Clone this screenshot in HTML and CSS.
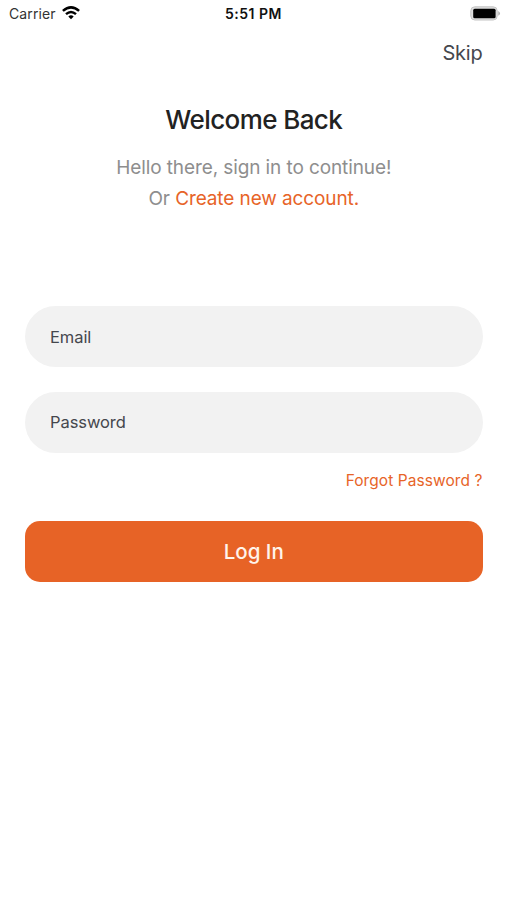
FILE: index.html
```html
<!DOCTYPE html>
<html lang="en">
<head>
<meta charset="utf-8">
<title>Log In</title>
<link rel="stylesheet" href="styles.css">
</head>
<body>
<div class="status">
  <div class="carrier"><span>Carrier</span>
    <svg class="wifi" width="18" height="14" viewBox="0 0 18 14" fill="none" stroke="#000" stroke-width="2.5"><path d="M.9 4.9Q9-2.2 17.1 4.9M4 8.1Q9 3.8 14 8.1"/><path d="M6.3 10.4Q9 8.2 11.7 10.4L9 13.3Z" fill="#000" stroke="none"/></svg>
  </div>
  <div class="time">5:51 PM</div>
  <svg class="battery" width="31" height="15" viewBox="0 0 31 15"><rect x=".8" y=".8" width="26.4" height="13.2" rx="4" fill="#dedede" stroke="#c4c4c4"/><rect x="3.2" y="2.8" width="22.4" height="9.4" rx="1.5"/><path d="M28.3 5Q31.6 7.4 28.3 9.8Z" fill="#aaa"/></svg>
</div>
<main class="screen">
  <a class="skip">Skip</a>
  <h1 class="title">Welcome Back</h1>
  <p class="intro"><span class="hello">Hello there, sign in to continue!</span><br><span class="or">Or <a class="create">Create new account.</a></span></p>
  <form class="form">
    <div class="field"><span class="email">Email</span></div>
    <div class="field"><span class="password">Password</span></div>
    <a class="forgot">Forgot Password ?</a>
    <button class="login" type="button"><span>Log In</span></button>
  </form>
</main>
</body>
</html>
```
FILE: styles.css
```css
* { box-sizing: border-box; }
body { margin: 0; background: #fff; font-family: Inter, "Liberation Sans", sans-serif; color: #45474d; }
.status { height: 28px; padding: 0 6px 0 9px; display: grid; grid-template-columns: 1fr auto 1fr; align-items: center; color: #111; font-size: 14px; line-height: 28px; }
.carrier { display: flex; align-items: center; gap: 6px; color: #333; letter-spacing: .1px; }
.wifi { margin-top: -2px; }
.time { margin-left: -3px; font-weight: 600; letter-spacing: .5px; }
.battery { justify-self: end; margin-top: -1px; }
.screen { padding: 10.5px 24.5px 0 25px; display: flex; flex-direction: column; }
.skip { align-self: flex-end; font-size: 20px; line-height: 28px; letter-spacing: -.2px; }
.title { margin: 35.5px 0 0; text-align: center; font-size: 26px; line-height: 36px; font-weight: 500; letter-spacing: -.6px; color: #222; }
.intro { margin: 14px 0 0; text-align: center; font-size: 19px; line-height: 31px; letter-spacing: -.1px; color: #8e8e8e; }
.create, .forgot { color: #e76428; }
.form { margin-top: 92.4px; display: flex; flex-direction: column; }
.field { height: 61px; margin-bottom: 24.5px; padding: 0 25px; border-radius: 31px; background: #f2f2f2; display: flex; align-items: center; font-size: 16.5px; letter-spacing: -.08px; }
.forgot { align-self: flex-end; margin-top: -8.5px; font-size: 15.5px; line-height: 24px; letter-spacing: .07px; }
.login { height: 61px; margin-top: 28.2px; padding: 0; border: 0; border-radius: 15px; background: #e76326; color: #fff4eb; font: 500 20.5px Inter, "Liberation Sans", sans-serif; }
```
